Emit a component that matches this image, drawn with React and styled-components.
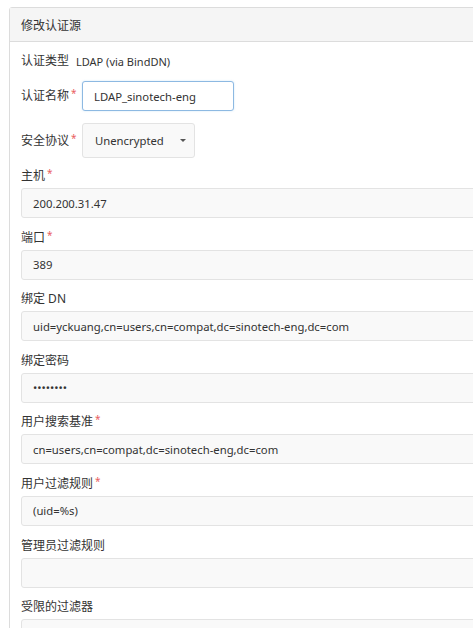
import React from "react";
import styled, { createGlobalStyle } from "styled-components";

const GlobalStyle = createGlobalStyle`
  html, body {
    margin: 0;
    padding: 0;
    overflow: hidden;
    background: #fff;
  }
  body {
    font-family: "Noto Sans", "Noto Sans CJK SC", sans-serif;
    font-size: 12px;
    color: #333;
  }
`;

const Page = styled.div`
  padding: 7px 0 0 9px;
`;

const Panel = styled.section`
  width: 540px;
  border: 1px solid #dcdcdc;
  border-radius: 3px;
  background: #fff;
`;

const PanelHead = styled.header`
  height: 33px;
  display: flex;
  align-items: center;
  padding: 0 11px;
  background: #f5f5f5;
  border-bottom: 1px solid #dcdcdc;
  font-size: 12px;
  color: #333;
`;

const PanelBody = styled.div`
  padding: 9px 11px 20px;
`;

const InlineRow = styled.div`
  display: flex;
  align-items: center;
  min-height: 20px;
  margin-bottom: ${(p) => p.$mb || 0}px;
`;

const InlineLabel = styled.label`
  width: 61px;
  flex: none;
  line-height: 20px;
`;

const Value = styled.span`
  margin-left: -6px;
  font-size: 11px;
`;

const Req = styled.span`
  color: #e96060;
  font-size: 10px;
  vertical-align: top;
  position: relative;
  top: -3px;
  margin-left: 2px;
`;

const Field = styled.div`
  margin-bottom: 10.6px;
`;

const FieldLabel = styled.label`
  display: block;
  line-height: 18px;
  margin-bottom: 3px;
`;

const Input = styled.input`
  box-sizing: border-box;
  display: block;
  width: ${(p) => p.$w || "100%"};
  height: 30px;
  padding: 0 11px;
  border: 1px solid ${(p) => (p.$focus ? "#8db9e2" : "#e3e3e3")};
  border-radius: 3px;
  background: ${(p) => (p.$focus ? "#fff" : "#f9f9f9")};
  box-shadow: ${(p) => (p.$focus ? "0 0 2px rgba(102,175,233,0.35)" : "none")};
  font-family: "Noto Sans", "Noto Sans CJK SC", sans-serif;
  font-size: 11.3px;
  color: #333;
  outline: none;
`;

const SelectBox = styled.div`
  box-sizing: border-box;
  width: 113px;
  height: 35px;
  display: flex;
  align-items: center;
  justify-content: space-between;
  padding: 0 8px 0 12px;
  border: 1px solid #e3e3e3;
  border-radius: 3px;
  background: #f9f9f9;
  color: #333;
  font-size: 11.3px;
`;

const Caret = styled.span`
  width: 0;
  height: 0;
  border-top: 3px solid #555;
  border-left: 3px solid transparent;
  border-right: 3px solid transparent;
`;

const fields = [
  { label: "主机", req: true, value: "200.200.31.47" },
  { label: "端口", req: true, value: "389" },
  { label: "绑定 DN", value: "uid=yckuang,cn=users,cn=compat,dc=sinotech-eng,dc=com" },
  { label: "绑定密码", value: "12345678", type: "password" },
  { label: "用户搜索基准", req: true, value: "cn=users,cn=compat,dc=sinotech-eng,dc=com" },
  { label: "用户过滤规则", req: true, value: "(uid=%s)" },
  { label: "管理员过滤规则", value: "" },
  { label: "受限的过滤器", value: "" },
];

export default function App() {
  return (
    <Page>
      <GlobalStyle />
      <Panel>
        <PanelHead>修改认证源</PanelHead>
        <PanelBody>
          <InlineRow $mb={10}>
            <InlineLabel>认证类型</InlineLabel>
            <Value>LDAP (via BindDN)</Value>
          </InlineRow>
          <InlineRow $mb={12}>
            <InlineLabel>
              认证名称<Req>*</Req>
            </InlineLabel>
            <Input $w="152px" $focus defaultValue="LDAP_sinotech-eng" />
          </InlineRow>
          <InlineRow $mb={9}>
            <InlineLabel>
              安全协议<Req>*</Req>
            </InlineLabel>
            <SelectBox>
              <span>Unencrypted</span>
              <Caret />
            </SelectBox>
          </InlineRow>
          {fields.map((f) => (
            <Field key={f.label}>
              <FieldLabel>
                {f.label}
                {f.req && <Req>*</Req>}
              </FieldLabel>
              <Input type={f.type || "text"} defaultValue={f.value} />
            </Field>
          ))}
        </PanelBody>
      </Panel>
    </Page>
  );
}
